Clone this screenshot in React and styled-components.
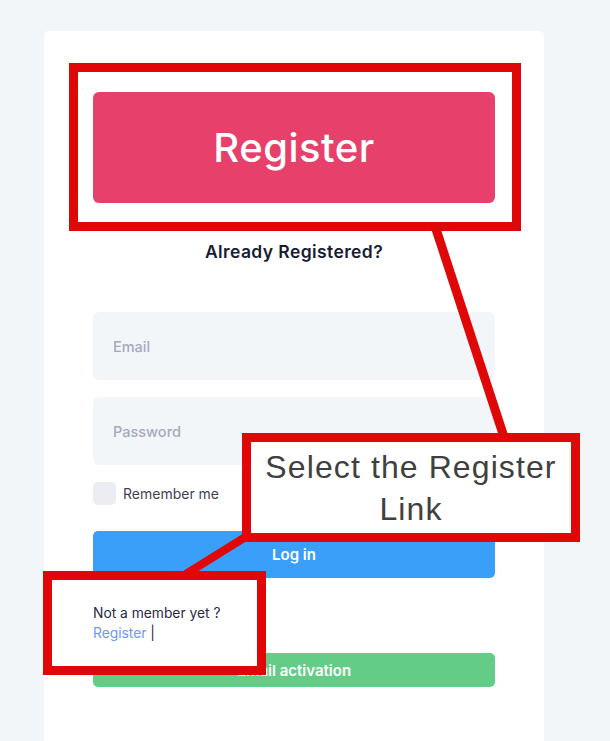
import React from "react";
import styled, { createGlobalStyle } from "styled-components";

const GlobalStyle = createGlobalStyle`
  html, body {
    margin: 0;
    padding: 0;
    background: #f3f6f9;
  }
  * {
    box-sizing: border-box;
  }
`;

const FONT = `Inter, "Noto Sans", sans-serif`;
const ANNOT_RED = "#df0707";

export default function App() {
  return (
    <Page>
      <GlobalStyle />
      <Card>
        <RegisterButton>Register</RegisterButton>
        <Heading>Already Registered?</Heading>
        <Form>
          <Field placeholder="Email" />
          <Field placeholder="Password" type="password" />
          <CheckRow>
            <CheckBox />
            <CheckLabel>Remember me</CheckLabel>
          </CheckRow>
          <ActionButton $bg="#3a9ff9" $height={47} $top={26}>
            Log in
          </ActionButton>
          <Member>
            <span>Not a member yet ?</span>
            <span>
              <MemberLink>Register</MemberLink> |
            </span>
          </Member>
          <ActionButton $bg="#63cd87" $height={34} $top={10}>
            Email activation
          </ActionButton>
        </Form>
      </Card>

      <Lines width="610" height="741" viewBox="0 0 610 741">
        <line x1="435" y1="226" x2="504" y2="437" stroke={ANNOT_RED} strokeWidth="9" />
        <line x1="247" y1="536" x2="186" y2="574" stroke={ANNOT_RED} strokeWidth="8" />
      </Lines>

      <AnnotBox $x={69} $y={63} $w={452} $h={168} />
      <AnnotBox $x={242} $y={433} $w={338} $h={109} $fill>
        <CalloutText>
          Select the Register
          <br />
          Link
        </CalloutText>
      </AnnotBox>
      <AnnotBox $x={43} $y={571} $w={223} $h={104} $fill />
    </Page>
  );
}

const Page = styled.div`
  position: relative;
  width: 610px;
  height: 741px;
  overflow: hidden;
  background: #f3f6f9;
  font-family: ${FONT};
`;

const Card = styled.div`
  margin: 31px 0 0 44px;
  width: 500px;
  height: 720px;
  background: #ffffff;
  border-radius: 5px 5px 0 0;
  padding: 61px 49px 0;
  display: flex;
  flex-direction: column;
`;

const RegisterButton = styled.button`
  height: 111px;
  width: 100%;
  border: none;
  border-radius: 6px;
  background: #e6406b;
  color: #ffffff;
  font-family: ${FONT};
  font-size: 40px;
  font-weight: 500;
  letter-spacing: 0.5px;
`;

const Heading = styled.h3`
  margin: 37px 0 0;
  text-align: center;
  font-size: 17.5px;
  line-height: 24px;
  font-weight: 600;
  letter-spacing: 0.4px;
  color: #181c32;
`;

const Form = styled.div`
  margin-top: 48px;
  display: flex;
  flex-direction: column;
`;

const Field = styled.input`
  height: 68px;
  width: 100%;
  border: none;
  border-radius: 6px;
  background: #f3f6f9;
  padding: 0 20px;
  margin-bottom: 17px;
  font-family: ${FONT};
  font-size: 14.5px;
  outline: none;

  &::placeholder {
    color: #a5a9bd;
    font-weight: 500;
  }
`;

const CheckRow = styled.label`
  display: flex;
  align-items: center;
  gap: 7px;
  height: 23px;
`;

const CheckBox = styled.span`
  width: 23px;
  height: 23px;
  border-radius: 5px;
  background: #ebedf3;
`;

const CheckLabel = styled.span`
  font-size: 14px;
  color: #3f4254;
`;

const ActionButton = styled.button`
  margin-top: ${({ $top }) => $top}px;
  height: ${({ $height }) => $height}px;
  width: 100%;
  border: none;
  border-radius: 5px;
  background: ${({ $bg }) => $bg};
  color: #ffffff;
  font-family: ${FONT};
  font-size: 15px;
  font-weight: 600;
`;

const Member = styled.div`
  position: relative;
  z-index: 3;
  margin-top: 25px;
  display: flex;
  flex-direction: column;
  font-size: 13.8px;
  line-height: 20px;
  color: #2a2a44;
`;

const MemberLink = styled.a`
  color: #6f97f5;
`;

const Lines = styled.svg`
  position: absolute;
  left: 0;
  top: 0;
  z-index: 2;
  pointer-events: none;
`;

const AnnotBox = styled.div`
  position: absolute;
  z-index: 2;
  left: ${({ $x }) => $x}px;
  top: ${({ $y }) => $y}px;
  width: ${({ $w }) => $w}px;
  height: ${({ $h }) => $h}px;
  border: 9px solid ${ANNOT_RED};
  background: ${({ $fill }) => ($fill ? "#ffffff" : "transparent")};
  display: flex;
  align-items: center;
  justify-content: center;
`;

const CalloutText = styled.div`
  font-family: "Liberation Sans", Arial, sans-serif;
  font-size: 32px;
  line-height: 42px;
  letter-spacing: 1.1px;
  color: #404040;
  text-align: center;
`;
